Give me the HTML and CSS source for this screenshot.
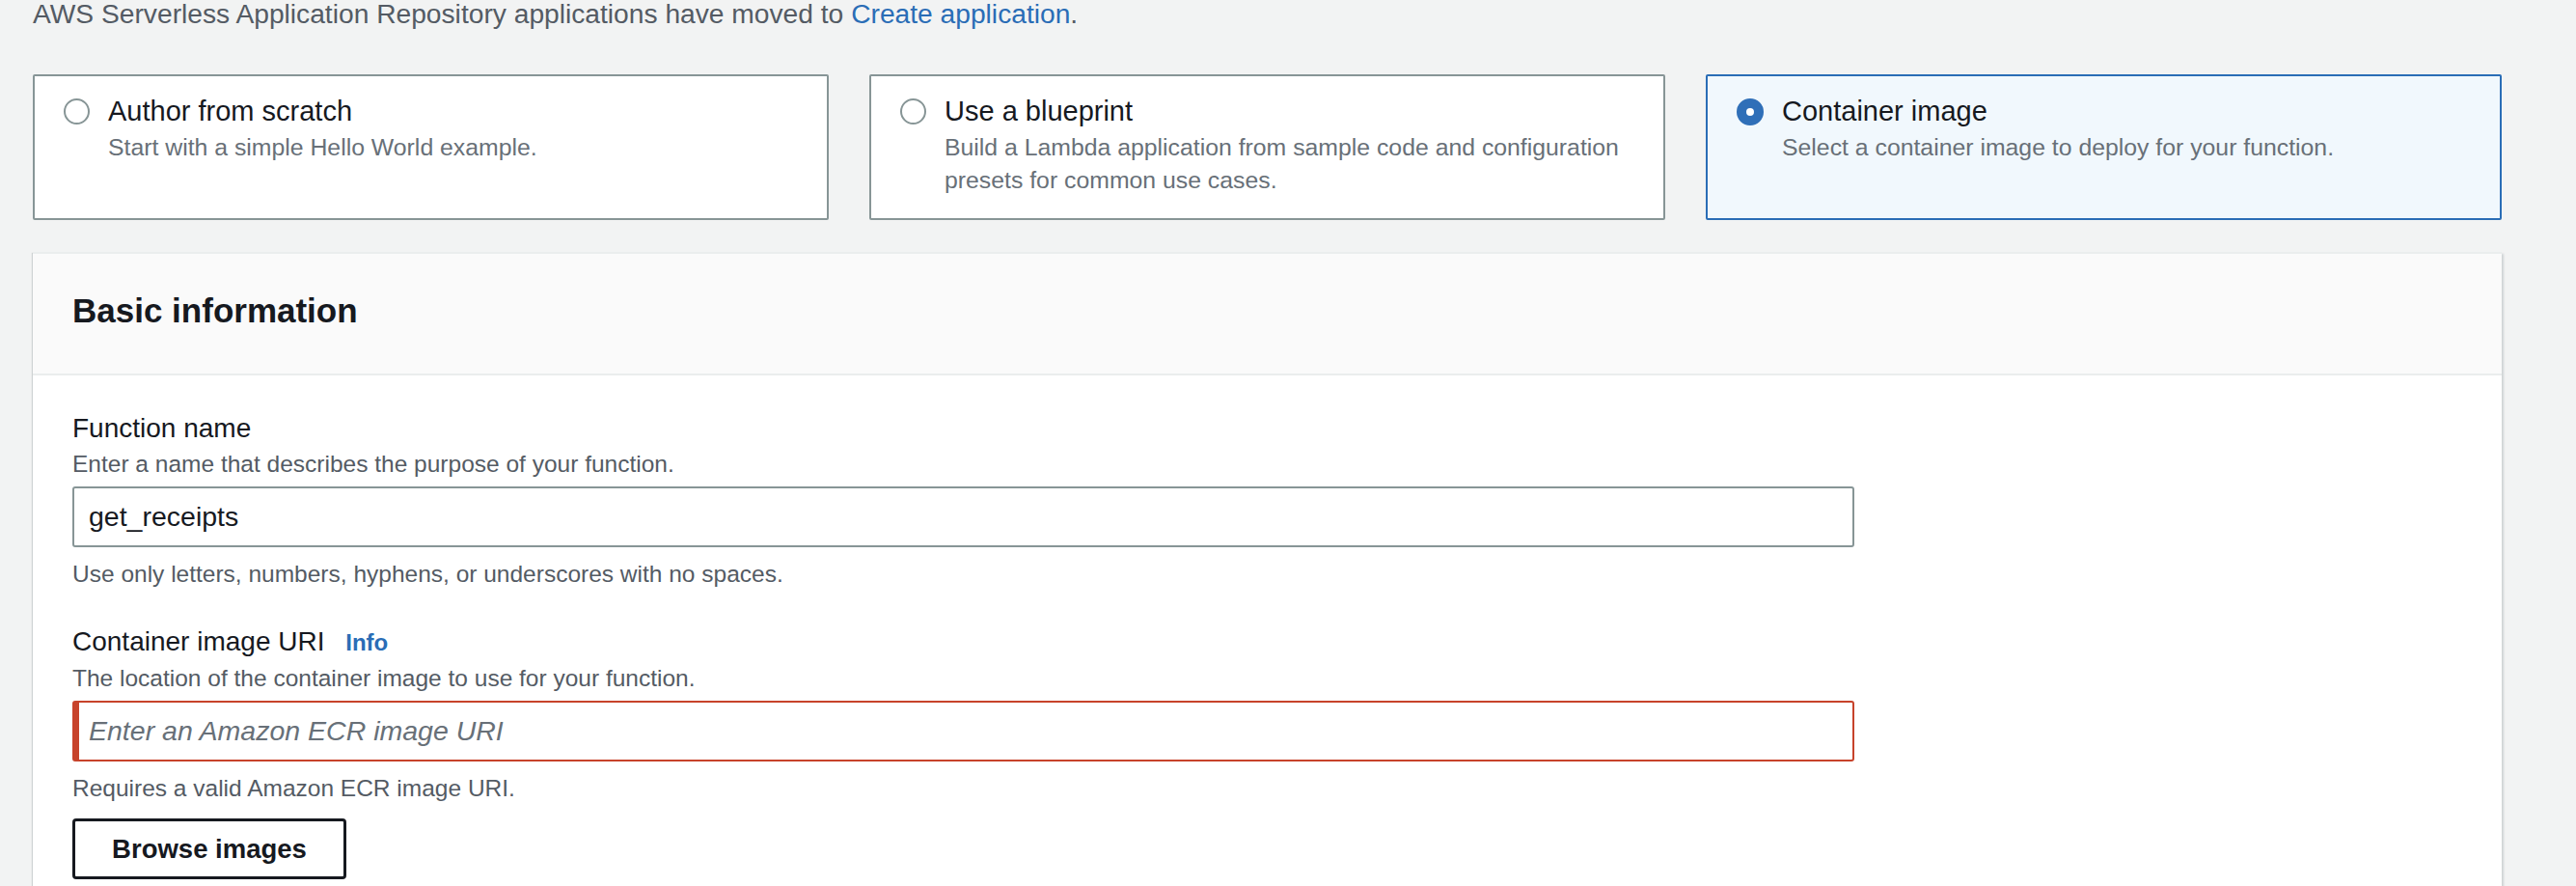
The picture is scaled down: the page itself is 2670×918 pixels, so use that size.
FILE: index.html
```html
<!DOCTYPE html>
<html lang="en">
<head>
<meta charset="utf-8">
<title>Create function</title>
<link rel="stylesheet" href="styles.css">
</head>
<body>
<div class="page">
  <p class="notice">AWS Serverless Application Repository applications have moved to <a class="link" href="#">Create application</a>.</p>

  <div class="tiles">
    <div class="tile">
      <span class="radio"></span>
      <div class="tile-text">
        <div class="tile-title">Author from scratch</div>
        <div class="tile-desc">Start with a simple Hello World example.</div>
      </div>
    </div>
    <div class="tile">
      <span class="radio"></span>
      <div class="tile-text">
        <div class="tile-title">Use a blueprint</div>
        <div class="tile-desc">Build a Lambda application from sample code and configuration presets for common use cases.</div>
      </div>
    </div>
    <div class="tile tile-selected">
      <span class="radio radio-checked"></span>
      <div class="tile-text">
        <div class="tile-title">Container image</div>
        <div class="tile-desc">Select a container image to deploy for your function.</div>
      </div>
    </div>
  </div>

  <section class="panel">
    <header class="panel-header">
      <h2 class="panel-title">Basic information</h2>
    </header>
    <div class="panel-body">
      <div class="field">
        <div class="label">Function name</div>
        <div class="desc">Enter a name that describes the purpose of your function.</div>
        <div class="input">get_receipts</div>
        <div class="help">Use only letters, numbers, hyphens, or underscores with no spaces.</div>
      </div>
      <div class="field">
        <div class="label">Container image URI <a class="info" href="#">Info</a></div>
        <div class="desc">The location of the container image to use for your function.</div>
        <div class="input input-invalid"><span class="placeholder">Enter an Amazon ECR image URI</span></div>
        <div class="help">Requires a valid Amazon ECR image URI.</div>
        <button class="btn">Browse images</button>
      </div>
    </div>
  </section>
</div>
</body>
</html>
```

FILE: styles.css
```css
html, body {
  margin: 0;
  padding: 0;
  overflow: hidden;
  background: #f2f3f3;
}

body {
  font-family: "Liberation Sans", Arial, sans-serif;
  color: #16191f;
}

.page {
  padding: 0 77px 0 34px;
}

.notice {
  margin: 0;
  font-size: 28.2px;
  line-height: 28px;
  color: #545b64;
}

.link {
  color: #2a6db6;
  text-decoration: none;
}

.tiles {
  display: grid;
  grid-template-columns: repeat(3, 1fr);
  gap: 42px;
  margin-top: 49px;
}

.tile {
  display: flex;
  align-items: flex-start;
  gap: 19px;
  background: #fff;
  border: 2px solid #879596;
  border-radius: 2px;
  padding: 18px 30px 20px 30px;
  min-height: 109px;
}

.tile-selected {
  background: #f1f8fd;
  border-color: #2a6db6;
}

.radio {
  flex: none;
  width: 27px;
  height: 27px;
  box-sizing: border-box;
  border: 2px solid #879596;
  border-radius: 50%;
  background: #fff;
  margin-top: 5px;
}

.radio-checked {
  border: 10px solid #2f6fb8;
  width: 28px;
  height: 28px;
}

.tile-title {
  font-size: 29px;
  line-height: 37px;
  color: #16191f;
}

.tile-desc {
  font-size: 24.8px;
  line-height: 34px;
  color: #687078;
  margin-top: 2px;
}

.panel {
  margin-top: 33px;
  background: #fff;
  border-top: 2px solid #eaeded;
  box-shadow: 2px 2px 2px 0 rgba(0, 28, 36, 0.15), -1px 1px 1px 0 rgba(0, 28, 36, 0.15);
}

.panel-header {
  background: #fafafa;
  border-bottom: 2px solid #eaeded;
  height: 124px;
  display: flex;
  align-items: center;
  padding: 0 41px;
}

.panel-title {
  margin: 0;
  font-size: 35px;
  line-height: 40px;
  font-weight: bold;
  color: #16191f;
  position: relative;
  top: -3px;
}

.panel-body {
  padding: 36px 41px 60px 41px;
}

.field + .field {
  margin-top: 34px;
}

.label {
  font-size: 28px;
  line-height: 37px;
  color: #16191f;
}

.info {
  font-size: 24px;
  font-weight: bold;
  color: #2a6db6;
  text-decoration: none;
  margin-left: 14px;
}

.desc {
  font-size: 24.5px;
  line-height: 34px;
  color: #545b64;
  margin-top: 2px;
}

.help {
  font-size: 24.5px;
  line-height: 34px;
  color: #545b64;
  margin-top: 11px;
}

.input {
  width: 1847px;
  height: 63px;
  box-sizing: border-box;
  margin-top: 6px;
  border: 2px solid #879596;
  border-radius: 3px;
  padding: 0 15px;
  display: flex;
  align-items: center;
  font-size: 28.5px;
  color: #16191f;
  background: #fff;
}

.input-invalid {
  border-color: #c7432b;
  border-left-width: 7px;
  padding-left: 10px;
}

.placeholder {
  font-style: italic;
  color: #687078;
}

.btn {
  display: block;
  margin-top: 14px;
  width: 284px;
  height: 63px;
  box-sizing: border-box;
  background: #fff;
  border: 3px solid #16191f;
  border-radius: 4px;
  font-family: "Liberation Sans", Arial, sans-serif;
  font-size: 27.5px;
  font-weight: bold;
  color: #16191f;
  padding: 0;
}
```
